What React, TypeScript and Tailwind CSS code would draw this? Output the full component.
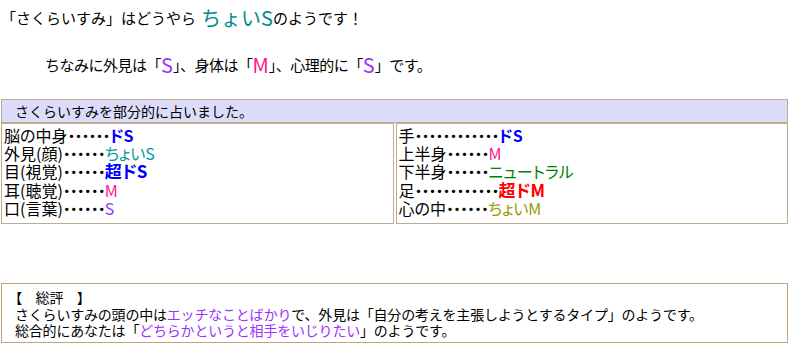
import React from "react";

type Part = { label: string; dots: string; value: string; cls: string };

const leftRows: Part[] = [
  { label: "脳の中身", dots: "･･････", value: "ドS", cls: "text-[#0000ff] font-bold" },
  { label: "外見(顔)", dots: "･･････", value: "ちょいS", cls: "text-[#009999]" },
  { label: "目(視覚)", dots: "･･････", value: "超ドS", cls: "text-[#0000ff] font-bold text-[17px]" },
  { label: "耳(聴覚)", dots: "･･････", value: "M", cls: "text-[#ff1493]" },
  { label: "口(言葉)", dots: "･･････", value: "S", cls: "text-[#9933ff]" },
];

const rightRows: Part[] = [
  { label: "手", dots: "････････････", value: "ドS", cls: "text-[#0000ff] font-bold" },
  { label: "上半身", dots: "･･････", value: "M", cls: "text-[#ff1493]" },
  { label: "下半身", dots: "･･････", value: "ニュートラル", cls: "text-[#008000]" },
  { label: "足", dots: "････････････", value: "超ドM", cls: "text-[#ff0000] font-bold text-[17px]" },
  { label: "心の中", dots: "･･････", value: "ちょいM", cls: "text-[#999900]" },
];

function PartList({ rows }: { rows: Part[] }) {
  return (
    <div className="flex flex-col [font-feature-settings:'palt']">
      {rows.map((r) => (
        <div key={r.label} className="flex h-[18.2px] items-center whitespace-nowrap leading-[18px]">
          <span>{r.label}</span>
          <span className="text-[16px] font-black tracking-[-1px] [font-feature-settings:normal]">{r.dots}</span>
          <span className={r.cls}>{r.value}</span>
        </div>
      ))}
    </div>
  );
}

export default function App() {
  return (
    <div className="h-[358px] w-[789px] overflow-hidden bg-white text-[16px] text-black [font-family:'Noto_Sans_CJK_JP',sans-serif]">
      <div className="flex h-[36px] items-center pl-[1px] text-[15px]">
        <span>「さくらいすみ」はどうやら</span>
        <span className="ml-[5px] text-[20px] text-[#008b8b]">ちょいS</span>
        <span>のようです！</span>
      </div>

      <div className="mt-[17px] flex h-[24px] items-center pl-[45px] text-[15px] tracking-[-0.5px]">
        ちなみに外見は「<span className="text-[20px] tracking-normal text-[#9933ff]">S</span>」、身体は「
        <span className="text-[20px] tracking-normal text-[#ff1493]">M</span>」、心理的に「
        <span className="text-[20px] tracking-normal text-[#9933ff]">S</span>」です。
      </div>

      <div className="ml-[1px] mt-[22px] w-[787px]">
        <div className="flex h-[24px] items-center border border-[#bcab91] bg-[#dcdcfa] pl-[13px] text-[14px]">
          さくらいすみを部分的に占いました。
        </div>
        <div className="grid h-[101px] grid-cols-2 gap-[2px]">
          <div className="border border-[#bcab91] pl-[2px] pt-[2px]">
            <PartList rows={leftRows} />
          </div>
          <div className="border border-[#bcab91] pl-[2px] pt-[2px]">
            <PartList rows={rightRows} />
          </div>
        </div>
      </div>

      <div className="ml-[1px] mt-[59px] h-[60px] w-[787px] border border-[#c0a47c] pl-[13px] pt-[5px] text-[14px] leading-[16.5px] tracking-[-0.2px]">
        <div className="[font-feature-settings:'palt']">【　総評　】</div>
        <div>
          さくらいすみの頭の中は<span className="text-[#9933ff]">エッチなことばかり</span>
          で、外見は「自分の考えを主張しようとするタイプ」のようです。
        </div>
        <div>
          総合的にあなたは「<span className="text-[#9933ff]">どちらかというと相手をいじりたい</span>」のようです。
        </div>
      </div>
    </div>
  );
}
